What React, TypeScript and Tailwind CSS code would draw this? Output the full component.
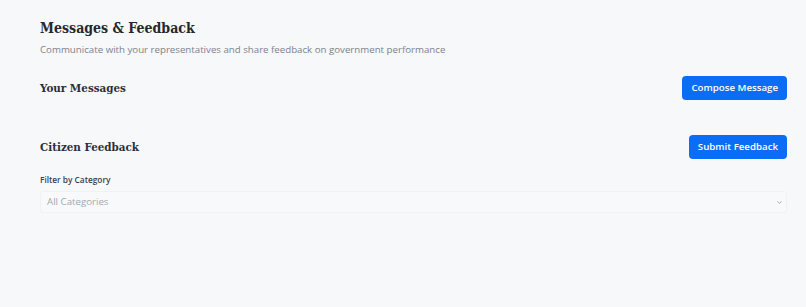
import React from "react";

const serif = {
  fontFamily: '"DejaVu Serif Condensed", "DejaVu Serif", "Liberation Serif", serif',
  fontStretch: "condensed" as const,
};

const Section = ({ title, action }: { title: string; action: string }) => (
  <div className="flex h-6 items-center justify-between">
    <h2 className="pt-px text-[11.5px] font-bold text-[#2b2f36]" style={serif}>
      {title}
    </h2>
    <button className="h-6 rounded-[4px] bg-[#0b6cf6] px-[9px] text-[9.7px] font-semibold text-white">
      {action}
    </button>
  </div>
);

export default function App() {
  return (
    <div
      className="min-h-[307px] w-full bg-[#f7f8fa] pl-10 pr-[19px] pt-[18px]"
      style={{ fontFamily: '"Open Sans", "Noto Sans", sans-serif' }}
    >
      <h1 className="text-[14px] font-bold leading-5 text-[#25282d]" style={serif}>
        Messages &amp; Feedback
      </h1>
      <p className="mt-[5px] text-[9.7px] leading-[14px] text-[#7c828b]">
        Communicate with your representatives and share feedback on government performance
      </p>

      <div className="mt-[19px]">
        <Section title="Your Messages" action="Compose Message" />
      </div>

      <div className="mt-[35px]">
        <Section title="Citizen Feedback" action="Submit Feedback" />
        <label className="mt-[14px] block text-[8.3px] font-semibold leading-[13px] text-[#3a3e45]">
          Filter by Category
        </label>
        <div className="mt-[5px] flex h-[22px] items-center justify-between rounded-[3px] border border-[#f1f2f4] bg-[#f8f9fb] pl-[6px] pr-[3px]">
          <span className="text-[9.7px] text-[#a3a8b0]">All Categories</span>
          <svg width="7" height="7" viewBox="0 0 16 16" fill="none" stroke="#9aa0a8" strokeWidth="2" strokeLinecap="round" strokeLinejoin="round">
            <path d="M4 6l4 4 4-4" />
          </svg>
        </div>
      </div>
    </div>
  );
}
